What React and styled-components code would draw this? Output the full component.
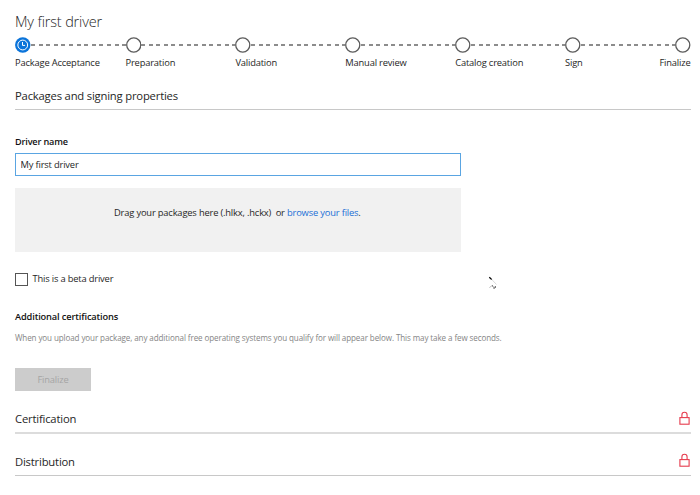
import React from "react";
import styled, { createGlobalStyle } from "styled-components";

const GlobalStyle = createGlobalStyle`
  * { box-sizing: border-box; }
  body {
    margin: 0;
    background: #fff;
    color: #262626;
    font-family: "Open Sans", "Noto Sans", sans-serif;
    font-size: 9.33px;
    letter-spacing: -0.17px;
    line-height: 14px;
  }
`;

const Page = styled.main`
  position: relative;
  display: flex;
  flex-direction: column;
  width: 700px;
  height: 495px;
  padding: 11px 9.5px 0 15px;
  overflow: hidden;
`;

const Title = styled.h1`
  margin: 0;
  height: 26px;
  font-size: 14.5px;
  font-weight: 300;
  letter-spacing: -0.16px;
  line-height: 21px;
`;

const Stepper = styled.ol`
  display: grid;
  grid-template-columns: 110.5px repeat(5, 1fr) 15.5px;
  height: 47px;
  margin: 0;
  padding: 0;
  list-style: none;
`;

const Step = styled.li`
  display: flex;
  flex-direction: column;
  align-items: ${(p) => (p.$last ? "flex-end" : "stretch")};
  gap: 2.5px;
  white-space: nowrap;
`;

const Track = styled.div`
  display: flex;
  align-items: center;
  height: 16px;
`;

const StepIcon = styled.svg`
  flex: none;
  width: 15.5px;
  height: 16px;
`;

const Connector = styled.div`
  flex: 1;
  height: 2px;
  background: repeating-linear-gradient(90deg, #8c8c8c 0 4px, transparent 4px 7.6px);
`;

const SectionHeader = styled.header`
  display: flex;
  align-items: flex-start;
  justify-content: space-between;
  height: 24px;
  border-bottom: 1px solid #c8c8c8;
`;

const OpenHeader = styled(SectionHeader)`
  height: 26px;
  padding-top: 3px;
`;

const CertificationHeader = styled(SectionHeader)`
  border-bottom: 2px solid #dcdcdc;
`;

const DistributionHeader = styled(SectionHeader)`
  margin-top: 18px;
  padding-top: 0.5px;
`;

const SectionTitle = styled.h2`
  margin: 0;
  font-size: 11.25px;
  font-weight: 400;
  letter-spacing: -0.19px;
  line-height: 18px;
`;

const Form = styled.form`
  display: flex;
  flex-direction: column;
  align-items: flex-start;
  height: 300px;
  padding-top: 25px;
`;

const FieldLabel = styled.label`
  height: 18px;
  color: #111;
  font-size: 9.15px;
  font-weight: 600;
`;

const TextInput = styled.input`
  width: 446px;
  height: 23px;
  padding: 0 4.5px 0;
  border: 1px solid #5aa5e2;
  outline: none;
  background: #fff;
  color: #262626;
  font: inherit;
  letter-spacing: inherit;
`;

const DropZone = styled.div`
  width: 446px;
  height: 64px;
  margin-top: 12px;
  padding: 18px 0 0 99px;
  background: #f1f1f1;
  white-space: pre;
`;

const Link = styled.a`
  color: #1b6fd6;
  text-decoration: none;
`;

const CheckboxRow = styled.label`
  display: flex;
  align-items: center;
  gap: 4.5px;
  margin-top: 20px;
`;

const CheckBox = styled.input`
  appearance: none;
  width: 13px;
  height: 13px;
  margin: 0;
  border: 1px solid #555;
  background: #fff;
`;

const SubHeading = styled.h3`
  margin: 24px 0 0;
  color: #111;
  font-size: 9.25px;
  font-weight: 600;
  letter-spacing: -0.14px;
  line-height: 14px;
`;

const Hint = styled.p`
  margin: 7px 0 0;
  color: #858585;
  font-size: 8.05px;
  letter-spacing: -0.1px;
  white-space: nowrap;
`;

const SubmitButton = styled.button`
  width: 76px;
  height: 23px;
  margin-top: 23px;
  padding: 0;
  border: 0;
  background: #cccccc;
  color: #a5a5a5;
  font: inherit;
  letter-spacing: inherit;
`;

const LockSvg = styled.svg`
  width: 12px;
  height: 15px;
  margin-top: 0.7px;
`;

const Pointer = styled.svg`
  position: absolute;
  left: 487px;
  top: 275px;
  width: 12px;
  height: 16px;
`;

const steps = [
  "Package Acceptance",
  "Preparation",
  "Validation",
  "Manual review",
  "Catalog creation",
  "Sign",
  "Finalize",
];

function StepMarker({ active }) {
  return (
    <StepIcon viewBox="0 0 15.5 16" fill="none">
      {active ? (
        <>
          <circle cx="7.75" cy="8" r="7.7" fill="#0b74da" />
          <circle cx="7.75" cy="8" r="4.9" stroke="#fff" strokeWidth="1" />
          <path d="M7.5 5v3.4h2.6" stroke="#fff" strokeWidth="1" />
        </>
      ) : (
        <circle cx="7.75" cy="8" r="7.05" stroke="#5c5c5c" strokeWidth="1.3" />
      )}
    </StepIcon>
  );
}

function Lock() {
  return (
    <LockSvg viewBox="0 0 12 15" fill="none" stroke="#e63c4e" strokeWidth="1.1">
      <rect x="0.9" y="6.6" width="9.2" height="6.6" />
      <path d="M2.9 6.6V4a2.6 2.7 0 0 1 5.2 0v2.6" />
    </LockSvg>
  );
}

export default function App() {
  return (
    <>
      <GlobalStyle />
      <Page>
        <Title>My first driver</Title>
        <Stepper>
          {steps.map((name, i) => {
            const last = i === steps.length - 1;
            return (
              <Step key={name} $last={last}>
                <Track>
                  <StepMarker active={i === 0} />
                  {!last && <Connector />}
                </Track>
                <span>{name}</span>
              </Step>
            );
          })}
        </Stepper>
        <OpenHeader>
          <SectionTitle>Packages and signing properties</SectionTitle>
        </OpenHeader>
        <Form onSubmit={(e) => e.preventDefault()}>
          <FieldLabel htmlFor="driver-name">Driver name</FieldLabel>
          <TextInput id="driver-name" defaultValue="My first driver" />
          <DropZone>
            {"Drag your packages here (.hlkx, .hckx)  or "}
            <Link>browse your files</Link>.
          </DropZone>
          <CheckboxRow>
            <CheckBox type="checkbox" />
            This is a beta driver
          </CheckboxRow>
          <SubHeading>Additional certifications</SubHeading>
          <Hint>
            When you upload your package, any additional free operating systems you
            qualify for will appear below. This may take a few seconds.
          </Hint>
          <SubmitButton disabled>Finalize</SubmitButton>
        </Form>
        <CertificationHeader>
          <SectionTitle>Certification</SectionTitle>
          <Lock />
        </CertificationHeader>
        <DistributionHeader>
          <SectionTitle>Distribution</SectionTitle>
          <Lock />
        </DistributionHeader>
        <Pointer viewBox="0 0 12 16" fill="none">
          <path d="M2.3 2.2l2.5 2.4" stroke="#000" strokeWidth="1.3" />
          <path d="M4.8 4.6l4.7 4.9" stroke="#ccc" strokeWidth=".7" />
          <path d="M2.4 12.6l2.6-2" stroke="#aaa" strokeWidth=".8" />
          <path d="M5 10.5l1.4 1.2" stroke="#333" strokeWidth="1" />
          <path d="M6.3 13h2v-1.8" stroke="#333" strokeWidth="1" strokeDasharray="1.6 .6" />
        </Pointer>
      </Page>
    </>
  );
}
